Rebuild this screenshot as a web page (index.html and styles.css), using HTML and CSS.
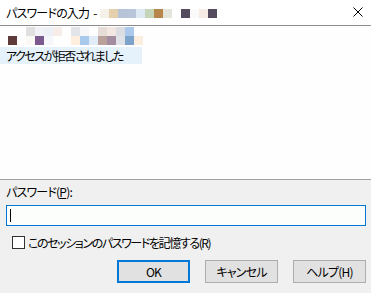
FILE: index.html
```
<!DOCTYPE html>
<html>
<head>
  <title>パスワードの入力</title>
  <link rel="stylesheet" href="styles.css">
</head>
<body>
  <div class="dialog">
    <header class="titlebar">
      <span class="title">パスワードの入力 -</span>
      <div class="mosaic title-mosaic">
        <i style="background:#f5f0e8"></i><i style="background:#e6cfad"></i><i style="background:#b7c3d6"></i><i style="background:#b9c5d8"></i><i style="background:#dde9f3"></i><i style="background:#c6d4b8"></i><i style="background:#b7864a"></i><i style="background:#e3e5db"></i><i></i><i style="background:#544c5e"></i><i style="background:#fafafa"></i><i style="background:#f7ebe5"></i><i style="background:#544c5e"></i>
      </div>
      <svg class="close" width="10" height="10" viewBox="0 0 10 10">
        <path d="M0.5 0.5 L9.5 9.5 M9.5 0.5 L0.5 9.5" stroke="#000" stroke-width="1" fill="none"/>
      </svg>
    </header>
    <main class="content">
      <div class="mosaic">
        <i></i><i></i><i style="background:#e0e0e0"></i><i style="background:#f0f2f7"></i><i style="background:#eef0f8"></i><i style="background:#f6ede8"></i><i></i><i style="background:#e3e3ea"></i><i style="background:#f7f7f9"></i><i></i><i style="background:#e7ddd8"></i><i style="background:#f2e8e1"></i><i style="background:#dcdde3"></i><i style="background:#aac9ec"></i>
      </div>
      <div class="mosaic">
        <i style="background:#5e3a3a"></i><i></i><i style="background:#faf9f5"></i><i style="background:#7a5a8e"></i><i style="background:#f4f6fa"></i><i></i><i></i><i style="background:#fdeede"></i><i style="background:#a9c9ec"></i><i style="background:#e1edf6"></i><i style="background:#b9a09a"></i><i style="background:#a38ba0"></i><i style="background:#dfe3e8"></i><i style="background:#7ca3c9"></i><i style="background:#fbeedf"></i>
      </div>
      <div class="message">アクセスが拒否されました</div>
    </main>
    <footer class="footer">
      <label class="field-label">パスワード(<u>P</u>):</label>
      <div class="password-box"><span class="caret"></span></div>
      <div class="remember">
        <span class="checkbox"></span>
        <span class="remember-text">このセッションのパスワードを記憶する(R)</span>
      </div>
      <div class="buttons">
        <button class="btn default">OK</button>
        <button class="btn">キャンセル</button>
        <button class="btn">ヘルプ(H)</button>
      </div>
    </footer>
  </div>
</body>
</html>
```

FILE: styles.css
```
* {
  margin: 0;
  padding: 0;
  box-sizing: border-box;
}

body {
  font-family: "Noto Sans CJK JP", "Noto Sans", sans-serif;
  font-size: 12px;
  font-feature-settings: "palt";
  color: #000;
  background: #f0f0f0;
}

.dialog {
  width: 371px;
  height: 293px;
  display: flex;
  flex-direction: column;
}

.titlebar {
  height: 26px;
  display: flex;
  align-items: center;
  padding-left: 6px;
  background: #fff;
  border-bottom: 1px solid #8c8c8c;
}

.title {
  line-height: 16px;
  letter-spacing: -0.8px;
  word-spacing: 2px;
}

.title-mosaic {
  margin-left: 3px;
  margin-top: 1px;
}

.close {
  margin-left: auto;
  margin-right: 8px;
  margin-top: -1px;
}

.mosaic {
  display: flex;
  height: 9px;
  padding-left: 8px;
}

.title-mosaic {
  padding-left: 0;
}

.mosaic i {
  width: 9px;
  height: 9px;
}

.content {
  height: 153px;
  background: #fdfefd;
  padding-top: 1px;
}

.message {
  margin-top: 2px;
  width: 142px;
  height: 17px;
  line-height: 17px;
  padding-left: 6px;
  background: #e5f1fb;
  white-space: nowrap;
  letter-spacing: -1.5px;
}

.footer {
  flex: 1;
  background: #f0f0f0;
  border-top: 1px solid #a0a0a0;
  padding: 4px 5px 0 6px;
}

.field-label {
  display: block;
  height: 16px;
  line-height: 16px;
  letter-spacing: -0.8px;
}

.password-box {
  margin-top: 5px;
  height: 21px;
  background: #fcfefc;
  border: 1px solid #0078d7;
  padding: 3px 0 0 3px;
}

.caret {
  display: block;
  width: 1px;
  height: 13px;
  background: #000;
}

.remember {
  margin-top: 9px;
  height: 15px;
  display: flex;
  align-items: center;
  padding-left: 6px;
  gap: 3px;
  white-space: nowrap;
}

.remember-text {
  letter-spacing: -1.4px;
}

.checkbox {
  width: 13px;
  height: 13px;
  background: #fff;
  border: 1px solid #333;
}

.buttons {
  margin-top: 10px;
  display: flex;
  justify-content: flex-end;
  gap: 15px;
}

.btn {
  width: 73px;
  height: 23px;
  font-family: inherit;
  font-size: 12px;
  font-feature-settings: "palt";
  letter-spacing: -0.8px;
  background: #e1e1e1;
  border: 1px solid #adadad;
  color: #000;
}

.btn.default {
  border: 2px solid #0078d7;
}
```
